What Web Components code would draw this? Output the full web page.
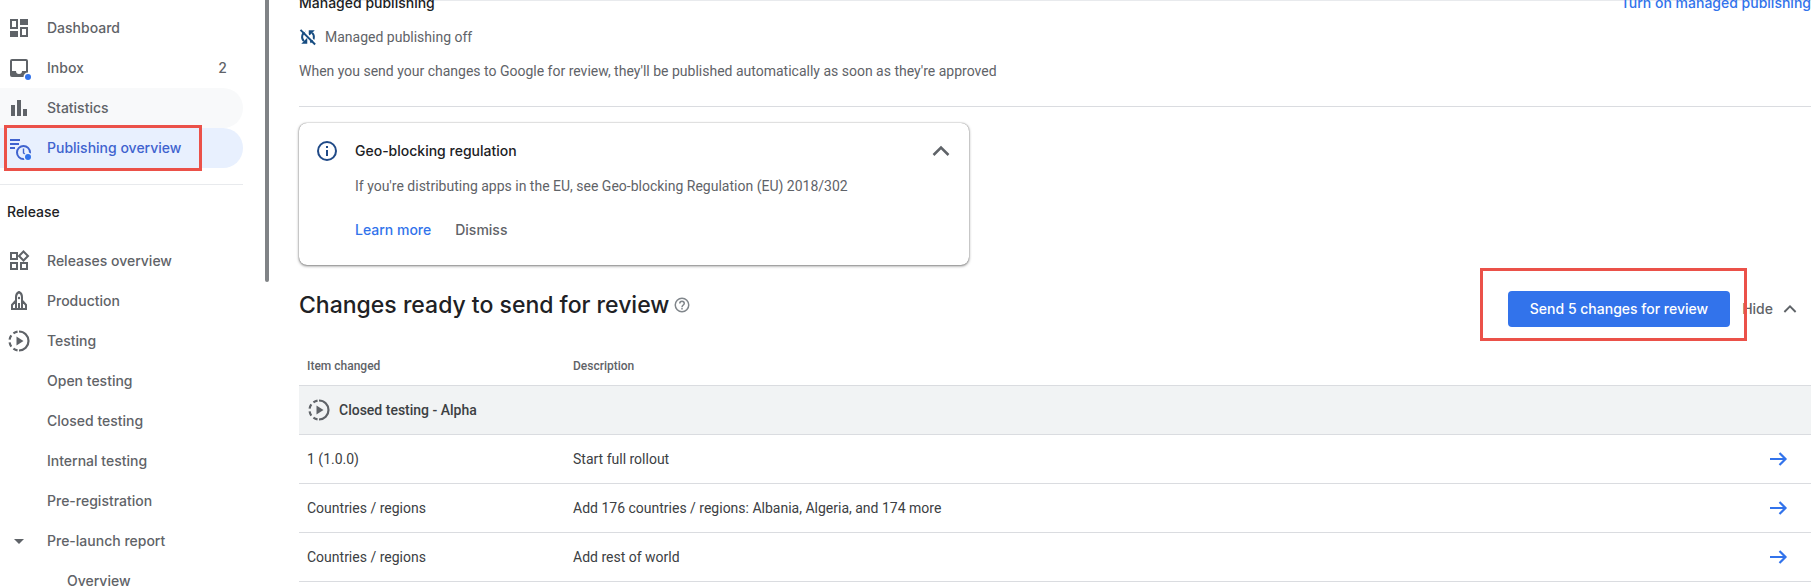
<!DOCTYPE html>
<html lang="en">
<head>
<meta charset="utf-8">
<meta name="viewport" content="width=device-width, initial-scale=1">
<title>Publishing overview</title>
<style>
  :root {
    --blue: #3273eb;
    --gray-600: #5f6368;
    --gray-900: #202124;
    --line: #dadce0;
    --mark: #eb5149;
    --display: Inter, Roboto, sans-serif;
  }
  body {
    margin: 0;
    height: 100vh;
    overflow: hidden;
    background: #fff;
    color: var(--gray-600);
    font: 14px/20px Roboto, "Liberation Sans", sans-serif;
  }
</style>
</head>
<body>
<console-app></console-app>

<script>
const ICONS = {
  dashboard: '<path fill="none" stroke="currentColor" stroke-width="2" d="M4 4h6v8H4zM14 12h6v8h-6z"/><path d="M13 3h8v6h-8zM3 15h8v6H3z"/>',
  inbox: '<path fill-rule="evenodd" d="M5 3h14a2 2 0 0 1 2 2v14a2 2 0 0 1-2 2H5a2 2 0 0 1-2-2V5a2 2 0 0 1 2-2zM5 5v10h4a3 3 0 0 0 6 0h4V5z"/><circle cx="21" cy="21" r="4.5" fill="#fff"/><circle cx="21" cy="21" r="3" fill="#3273eb"/>',
  stats: '<path d="M4 9h4v11H4zM10 4h4v16h-4zM16 13h4v7h-4z"/>',
  overview: '<path d="M3 3h10v2H3zM3 7h9v2H3zM3 11h5v2H3z"/><circle cx="16.5" cy="16.5" r="6.5" fill="none" stroke="currentColor" stroke-width="2"/><path fill="none" stroke="currentColor" stroke-width="1.4" d="M16.500 12.500v4.500l2 1.500"/><circle cx="21" cy="21" r="4.5" fill="#e8f0fe"/><circle cx="21" cy="21" r="3" fill="#3273eb"/>',
  releases: '<path fill="none" stroke="currentColor" stroke-width="2" d="M4 4h6v6H4zM4 14h6v6H4zM14 14h6v6h-6zM16.500 2.500l4.500 4.500-4.500 4.500L12 7z"/>',
  rocket: '<path fill="none" stroke="currentColor" stroke-width="2" d="M9 20V8c0-2.500 1-4 3-5 2 1 3 2.500 3 5v12M8.500 12L5 16v4h14v-4l-3.500-4M12 14v6"/><circle cx="12" cy="9" r="1.2"/>',
  testing: '<path fill="none" stroke="currentColor" stroke-width="2.2" d="M12 2.500a9.500 9.500 0 0 1 0 19"/><circle cx="12" cy="12" r="9.5" fill="none" stroke="currentColor" stroke-width="2.2" pathLength="80" stroke-dasharray="0 22 6 4 6 4 6 4 6 22"/><path d="M9.500 7.500v9l7-4.500z"/>',
  caret: '<path d="M7 10l5 5 5-5z"/>',
  syncOff: '<path fill="none" stroke="currentColor" stroke-width="2.6" d="M9 5a7.500 7.500 0 0 0-2.500 12.500M15 19a7.500 7.500 0 0 0 2.500-12.500"/><path d="M3 21h8v-8zM21 3h-8v8z"/><path stroke="#fff" stroke-width="2" d="M4 1l19 19"/><path stroke="currentColor" stroke-width="2.6" d="M2 2.500L21.500 22"/>',
  info: '<path d="M11 7h2v2h-2zm0 4h2v6h-2z"/><circle cx="12" cy="12" r="9" fill="none" stroke="currentColor" stroke-width="2"/>',
  help: '<circle cx="12" cy="12" r="9" fill="none" stroke="currentColor" stroke-width="2"/><path d="M11 16h2v2h-2z"/><path fill="none" stroke="currentColor" stroke-width="2" d="M9 10a3 3 0 0 1 6 0c0 2-3 2.200-3 5"/>',
  up: '<path fill="none" stroke="currentColor" stroke-width="2.5" d="M4.500 16l7.500-7.500 7.500 7.500"/>',
  arrow: '<path fill="none" stroke="currentColor" stroke-width="2.2" d="M4 12h15M13.500 6l6 6-6 6"/>'
};

class UiIcon extends HTMLElement {
  constructor() {
    super();
    this.attachShadow({ mode: "open" });
  }

  connectedCallback() {
    this.shadowRoot.innerHTML = `
      <style>
        :host {
          display: block;
          flex: none;
          width: 24px;
          height: 24px;
        }
        svg {
          display: block;
          width: 100%;
          height: 100%;
          fill: currentColor;
        }
      </style>
      <svg viewBox="0 0 24 24" aria-hidden="true">${ICONS[this.getAttribute("name")]}</svg>
    `;
  }
}

// Red frame laid over whatever is slotted in
class MarkBox extends HTMLElement {
  constructor() {
    super();
    this.attachShadow({ mode: "open" }).innerHTML = `
      <style>
        :host {
          display: block;
          position: relative;
        }
        .frame {
          position: absolute;
          inset: var(--frame-inset);
          border: 3px solid var(--mark);
          pointer-events: none;
          z-index: 1;
        }
      </style>
      <slot></slot>
      <div class="frame"></div>
    `;
  }
}

class NavItem extends HTMLElement {
  constructor() {
    super();
    this.attachShadow({ mode: "open" });
  }

  connectedCallback() {
    const icon = this.getAttribute("icon");
    const count = this.getAttribute("count");
    this.shadowRoot.innerHTML = `
      <style>
        :host {
          display: block;
        }
        a {
          display: flex;
          align-items: center;
          height: 40px;
          padding: 0 16px 0 7px;
          border-radius: 0 20px 20px 0;
          color: inherit;
          font: 500 14px/20px var(--display);
          text-decoration: none;
        }
        .icon {
          width: 40px;
          flex: none;
        }
        .label {
          flex: 1;
        }
        :host([nested]) .label {
          padding-left: 20px;
        }
        :host([hovered]) a {
          background: #f8f9fa;
        }
        :host([current]) a {
          background: #e8f0fe;
          color: #3f63cf;
        }
      </style>
      <a href="#">
        <span class="icon">${icon ? `<ui-icon name="${icon}"></ui-icon>` : ""}</span>
        <span class="label"><slot></slot></span>
        ${count ? `<span>${count}</span>` : ""}
      </a>
    `;
  }
}

class SideNav extends HTMLElement {
  constructor() {
    super();
    this.attachShadow({ mode: "open" }).innerHTML = `
      <style>
        :host {
          display: block;
          position: relative;
          overflow: hidden;
        }
        nav {
          padding: 8px 26px 0 0;
        }
        hr {
          margin: 16px 0;
          border: 0;
          border-top: 1px solid #e8eaed;
        }
        h2 {
          margin: 0 0 18px 7px;
          color: var(--gray-900);
          font: 500 14px/22px var(--display);
        }
        mark-box {
          --frame-inset: -3px 41px -3px 4px;
        }
        .thumb {
          position: absolute;
          top: 0;
          right: 0;
          width: 4px;
          height: 48%;
          border-radius: 0 0 2px 2px;
          background: #808386;
        }
      </style>
      <nav>
        <nav-item icon="dashboard">Dashboard</nav-item>
        <nav-item icon="inbox" count="2">Inbox</nav-item>
        <nav-item icon="stats" hovered>Statistics</nav-item>
        <mark-box>
          <nav-item icon="overview" current>Publishing overview</nav-item>
        </mark-box>
        <hr>
        <h2>Release</h2>
        <nav-item icon="releases">Releases overview</nav-item>
        <nav-item icon="rocket">Production</nav-item>
        <nav-item icon="testing">Testing</nav-item>
        <nav-item>Open testing</nav-item>
        <nav-item>Closed testing</nav-item>
        <nav-item>Internal testing</nav-item>
        <nav-item>Pre-registration</nav-item>
        <nav-item icon="caret">Pre-launch report</nav-item>
        <nav-item nested>Overview</nav-item>
      </nav>
      <div class="thumb"></div>
    `;
  }
}

class ManagedPublishing extends HTMLElement {
  constructor() {
    super();
    this.attachShadow({ mode: "open" }).innerHTML = `
      <style>
        :host {
          display: block;
          padding-bottom: 25px;
          border-bottom: 1px solid var(--line);
        }
        header {
          display: flex;
          justify-content: space-between;
          font: 500 14px/24px var(--display);
        }
        h2 {
          margin: 0;
          font: inherit;
          color: var(--gray-900);
        }
        a {
          color: var(--blue);
          text-decoration: none;
        }
        .status {
          display: flex;
          align-items: center;
          gap: 8px;
          margin: 12px 0 14px;
        }
        .status ui-icon {
          width: 18px;
          height: 18px;
          color: #174d82;
        }
        p {
          margin: 0;
        }
      </style>
      <header>
        <h2>Managed publishing</h2>
        <a href="#">Turn on managed publishing</a>
      </header>
      <div class="status"><ui-icon name="syncOff"></ui-icon>Managed publishing off</div>
      <p>When you send your changes to Google for review, they'll be published automatically as soon as they're approved</p>
    `;
  }
}

class NoticeCard extends HTMLElement {
  constructor() {
    super();
    this.attachShadow({ mode: "open" }).innerHTML = `
      <style>
        :host {
          display: grid;
          grid-template-columns: 24px 1fr 24px;
          column-gap: 16px;
          box-sizing: border-box;
          max-width: 670px;
          padding: 16px;
          border-radius: 8px;
          box-shadow: 0 1px 3px rgba(0, 0, 0, 0.5), 0 0 1px rgba(0, 0, 0, 0.5);
        }
        .info {
          color: #204a87;
        }
        h3 {
          margin: 0 0 13px;
          color: var(--gray-900);
          font: 500 14px/24px var(--display);
        }
        .actions {
          display: flex;
          gap: 24px;
          margin: 22px 0 7px;
          font: 500 14px/24px var(--display);
        }
        button {
          padding: 0;
          border: 0;
          background: none;
          color: inherit;
          font: inherit;
          height: 24px;
        }
        a {
          color: var(--blue);
          text-decoration: none;
        }
      </style>
      <ui-icon class="info" name="info"></ui-icon>
      <div>
        <h3><slot name="title"></slot></h3>
        <slot></slot>
        <div class="actions">
          <a href="#">Learn more</a>
          <button type="button">Dismiss</button>
        </div>
      </div>
      <button type="button" aria-label="Collapse"><ui-icon name="up"></ui-icon></button>
    `;
  }
}

class ReviewHeader extends HTMLElement {
  constructor() {
    super();
    this.attachShadow({ mode: "open" }).innerHTML = `
      <style>
        :host {
          display: flex;
          align-items: center;
          justify-content: space-between;
        }
        h1 {
          display: flex;
          align-items: center;
          gap: 4px;
          margin: 0 0 8px;
          color: var(--gray-900);
          font: 500 23px/32px var(--display);
        }
        h1 ui-icon {
          width: 18px;
          height: 18px;
          color: #80868b;
        }
        .actions {
          display: flex;
          align-items: center;
          gap: 12px;
          padding-right: 12px;
        }
        mark-box {
          --frame-inset: -23px -17px -14px -28px;
        }
        button {
          border: 0;
          background: none;
          color: inherit;
          font: 500 14px/20px var(--display);
        }
        .send {
          height: 36px;
          padding: 0 22px;
          border-radius: 4px;
          background: var(--blue);
          color: #fff;
        }
        .hide {
          display: flex;
          align-items: center;
          gap: 8px;
          padding: 0;
        }
        .hide ui-icon {
          width: 18px;
          height: 18px;
        }
      </style>
      <h1><slot></slot><ui-icon name="help"></ui-icon></h1>
      <div class="actions">
        <mark-box><button type="button" class="send">Send 5 changes for review</button></mark-box>
        <button type="button" class="hide">Hide <ui-icon name="up"></ui-icon></button>
      </div>
    `;
  }
}

class ChangesTable extends HTMLElement {
  constructor() {
    super();
    this.attachShadow({ mode: "open" });
  }

  set rows(rows) {
    this._rows = rows;
    this.render();
  }

  render() {
    this.shadowRoot.innerHTML = `
      <style>
        :host {
          display: block;
        }
        table {
          width: 100%;
          border-collapse: collapse;
          table-layout: fixed;
          color: #3c4043;
        }
        th,
        td {
          box-sizing: border-box;
          height: 49px;
          padding: 0 8px;
          border-bottom: 1px solid var(--line);
          text-align: left;
        }
        thead th {
          height: 38px;
          color: var(--gray-600);
          font-size: 12px;
          font-weight: 500;
        }
        .group th {
          background: #f1f3f4;
          font-weight: 500;
        }
        .group div {
          display: flex;
          align-items: center;
          gap: 8px;
        }
        .group ui-icon {
          color: var(--gray-600);
        }
        .item {
          width: 266px;
        }
        .open {
          width: 60px;
          padding-right: 21px;
        }
        a {
          display: flex;
          justify-content: flex-end;
          color: var(--blue);
        }
      </style>
      <table>
        <thead>
          <tr><th class="item">Item changed</th><th>Description</th><th class="open"></th></tr>
        </thead>
        <tbody>
          <tr class="group">
            <th colspan="3"><div><ui-icon name="testing"></ui-icon>Closed testing - Alpha</div></th>
          </tr>
          ${this._rows.map(([item, description]) => `
            <tr>
              <td>${item}</td>
              <td>${description}</td>
              <td class="open"><a href="#" aria-label="Open"><ui-icon name="arrow"></ui-icon></a></td>
            </tr>
          `).join("")}
        </tbody>
      </table>
    `;
  }
}

class ConsoleApp extends HTMLElement {
  constructor() {
    super();
    this.attachShadow({ mode: "open" }).innerHTML = `
      <style>
        :host {
          display: grid;
          grid-template-columns: 269px 1fr;
          height: 100vh;
        }
        main {
          display: flow-root;
          margin: 0 2px 0 30px;
          box-shadow: inset 0 1px #e8eaed;
        }
        managed-publishing {
          margin-top: -9px;
        }
        notice-card {
          margin: 16px 0 24px;
        }
        review-header {
          margin-bottom: 18px;
        }
      </style>
      <side-nav></side-nav>
      <main>
        <managed-publishing></managed-publishing>
        <notice-card>
          <span slot="title">Geo-blocking regulation</span>
          If you're distributing apps in the EU, see Geo-blocking Regulation (EU) 2018/302
        </notice-card>
        <review-header>Changes ready to send for review</review-header>
        <changes-table></changes-table>
      </main>
    `;
  }

  connectedCallback() {
    this.shadowRoot.querySelector("changes-table").rows = [
      ["1 (1.0.0)", "Start full rollout"],
      ["Countries / regions", "Add 176 countries / regions: Albania, Algeria, and 174 more"],
      ["Countries / regions", "Add rest of world"]
    ];
  }
}

customElements.define("ui-icon", UiIcon);
customElements.define("mark-box", MarkBox);
customElements.define("nav-item", NavItem);
customElements.define("side-nav", SideNav);
customElements.define("managed-publishing", ManagedPublishing);
customElements.define("notice-card", NoticeCard);
customElements.define("review-header", ReviewHeader);
customElements.define("changes-table", ChangesTable);
customElements.define("console-app", ConsoleApp);
</script>
</body>
</html>
